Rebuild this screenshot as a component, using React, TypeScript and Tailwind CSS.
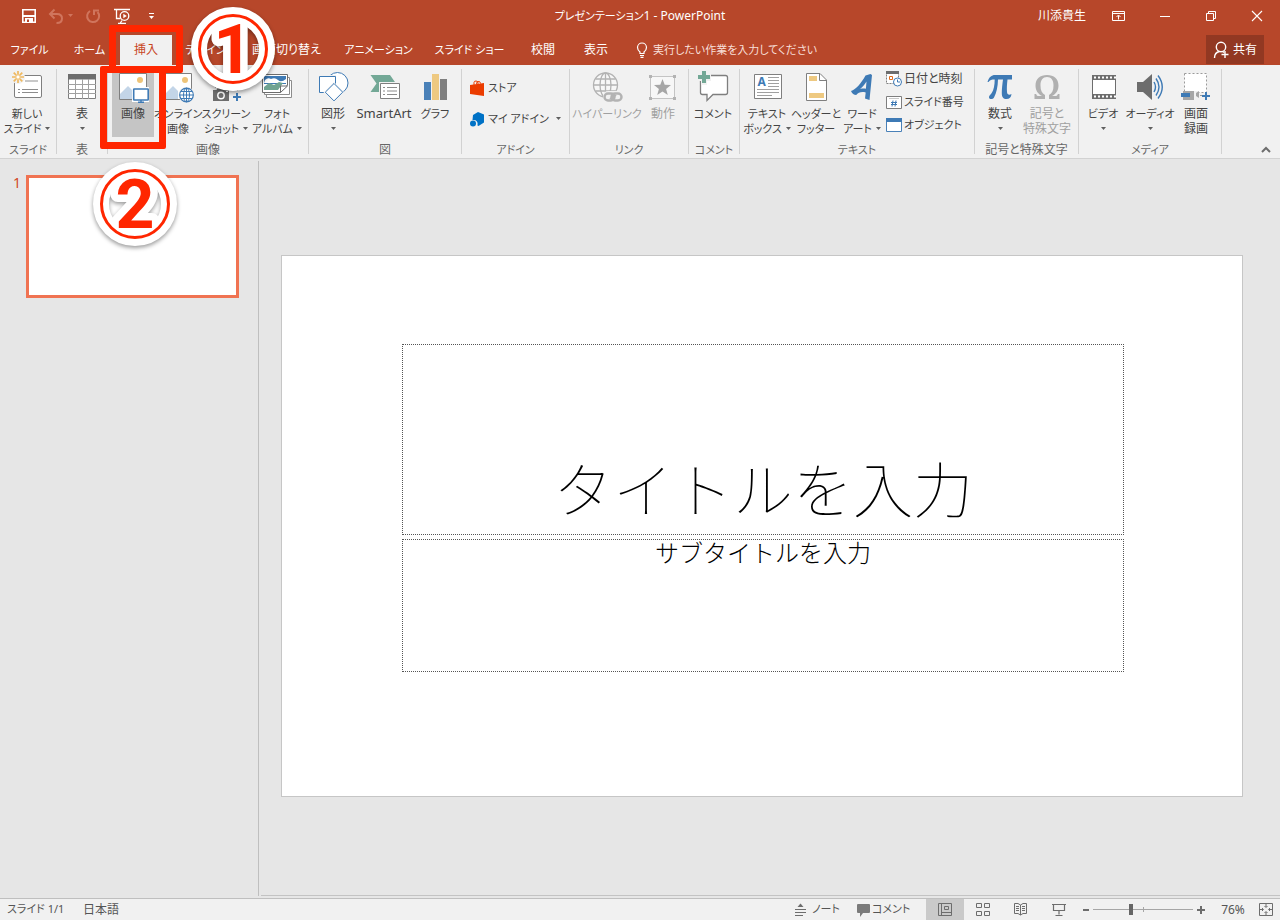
// Presentation editor window: title bar, ribbon (Insert tab), slide list,
// editing surface and status bar, with two numbered callouts on top.
import type { ReactNode } from "react";
import { clsx } from "clsx";

const TABS = [
  { label: "ファイル", className: "w-[59px] text-[11px]" },
  { label: "ホーム", className: "w-[61px] text-[11px]" },
  { label: "挿入", className: "w-[52px]", active: true },
  { label: "デザイン", className: "w-[67px] text-[11px]" },
  { label: "画面切り替え", className: "w-[95px]" },
  { label: "アニメーション", className: "w-[89px] text-[11px]" },
  { label: "スライド ショー", className: "w-[93px] text-[11px]" },
  { label: "校閲", className: "w-[54px]" },
  { label: "表示", className: "w-[52px]" },
];

function Caret({ className }: { className?: string }) {
  return (
    <svg viewBox="0 0 5 3" className={clsx("inline-block h-[3px] w-[5px] shrink-0", className)} aria-hidden="true">
      <path d="M0 0h5L2.5 3z" fill="currentColor" />
    </svg>
  );
}

function Icon({ children }: { children: ReactNode }) {
  return (
    <svg viewBox="0 0 32 32" className="h-8 w-8 shrink-0" fill="none" aria-hidden="true">
      {children}
    </svg>
  );
}

function SmallIcon({ children }: { children: ReactNode }) {
  return (
    <svg viewBox="0 0 16 16" className="h-4 w-4 shrink-0" fill="none" aria-hidden="true">
      {children}
    </svg>
  );
}

interface RibbonButtonProps {
  icon: ReactNode;
  lines: string[];
  className: string;
  menu?: boolean;
  active?: boolean;
  disabled?: boolean;
}

function RibbonButton({ icon, lines, className, menu, active, disabled }: RibbonButtonProps) {
  return (
    <button
      disabled={disabled}
      className={clsx(
        "flex h-[66px] shrink-0 flex-col items-center leading-[15px] whitespace-nowrap",
        className,
        active && "bg-[#c5c5c5]",
        disabled ? "text-[#a0a0a0]" : "text-[#444444]",
      )}
    >
      <Icon>{icon}</Icon>
      <span className="mt-[3px]">{lines[0]}</span>
      {(lines[1] || menu) && (
        <span className="flex h-[15px] items-center gap-1">
          {lines[1]}
          {menu && <Caret className="text-[#5f5f5f]" />}
        </span>
      )}
    </button>
  );
}

interface GroupProps {
  label: string;
  className: string;
  labelClassName?: string;
  children: ReactNode;
}

function Group({ label, className, labelClassName, children }: GroupProps) {
  return (
    <>
      <section className={clsx("flex shrink-0 flex-col", className)} aria-label={label}>
        <div className="flex min-h-[71px] flex-1">{children}</div>
        <div className={clsx("text-center leading-4 whitespace-nowrap text-[#666666]", labelClassName)}>{label}</div>
      </section>
      <div className="-mt-0.5 mb-1 w-px shrink-0 bg-[#d2d2d2]" />
    </>
  );
}

function PictureBase() {
  return (
    <>
      <path d="M2.5 2.5h27v26h-27z" fill="#fff" stroke="#7f7f7f" />
      <circle cx="23" cy="9" r="3" fill="#eec478" />
      <path d="M3 28V23l8-8 5 5v8z" fill="#c3d5e8" />
    </>
  );
}

const icons = {
  newSlide: (
    <>
      <rect x="3.5" y="4.5" width="27" height="22" rx="1.5" fill="#fff" stroke="#7f7f7f" />
      <path d="M14 10h13" stroke="#c8c8c8" strokeWidth="2" />
      <path d="M7 18.5h2M11 18.5h16M7 21.5h2M11 21.5h16" stroke="#8c8c8c" />
      <circle cx="7" cy="6" r="7" fill="#f1f1f1" />
      <path
        d="M7 0v3.5M7 8.5v3.5M1 6h3.5M9.5 6H13M2.7 1.7l2.5 2.5M8.8 7.8l2.5 2.5M2.7 10.3l2.5-2.5M8.8 4.2l2.5-2.5"
        stroke="#efb85e"
        strokeWidth="1.7"
      />
      <circle cx="7" cy="6" r="2.2" fill="#fff" stroke="#efb85e" />
    </>
  ),
  table: (
    <>
      <path d="M2.5 3.5h27v24h-27z" fill="#fff" stroke="#7f7f7f" />
      <path d="M2 3h28v5.5H2z" fill="#6d6d6d" />
      <path d="M2 13.5h28M2 18.5h28M2 22.5h28M9.5 8v20M16.5 8v20M22.5 8v20" stroke="#a0a0a0" />
    </>
  ),
  picture: (
    <>
      <PictureBase />
      <path d="M15 16h17v15H15z" fill="#fff" />
      <rect x="16.7" y="18" width="14.5" height="11" rx=".5" fill="#fff" stroke="#3e7ab5" strokeWidth="1.6" />
      <path d="M24 29v2M21 31.3h6" stroke="#3e7ab5" strokeWidth="1.4" />
    </>
  ),
  online: (
    <>
      <PictureBase />
      <circle cx="24.5" cy="24" r="8" fill="#f1f1f1" />
      <circle cx="24.5" cy="24" r="6.8" fill="#fff" stroke="#3e7ab5" strokeWidth="1.2" />
      <ellipse cx="24.5" cy="24" rx="3" ry="6.8" stroke="#3e7ab5" />
      <path d="M24.5 17v14M17.7 24h13.6M19 20.5h11M19 27.5h11" stroke="#3e7ab5" />
    </>
  ),
  screenshot: (
    <>
      <path d="M5.5 17V2.5h22V21" stroke="#9a9a9a" strokeDasharray="2 2" />
      <path d="M3 19h3.5l1-2h7l1 2H19v11H3z" fill="#6d6d6d" />
      <circle cx="11" cy="24.5" r="3.2" stroke="#fff" strokeWidth="1.4" />
      <path d="M16 20.5h2" stroke="#fff" />
      <path d="M27 22v8M23 26h8" stroke="#3e7ab5" strokeWidth="2" />
    </>
  ),
  album: (
    <>
      <path d="M5.5 9.5h25v17h-25z" fill="#fff" stroke="#8c8c8c" />
      <path d="M3.5 6.5h25v17h-25z" fill="#fff" stroke="#8c8c8c" />
      <path d="M1.5 3.5h25V14l-7 7.5h-18z" fill="#fff" stroke="#6d6d6d" />
      <path d="M3 5h22v8H3z" fill="#3e7ab5" />
      <path d="M4 9q3-3 6-1 4-2 7 1t8-1v4H3z" fill="#fff" />
      <path d="M3 16l5-4 5 2 5-3 4 1-5 7H3z" fill="#6fa391" />
      <path d="M19.5 21.5V15h7z" fill="#fff" stroke="#6d6d6d" />
    </>
  ),
  shapes: (
    <>
      <circle cx="20.5" cy="12" r="10.5" fill="#fff" stroke="#3e7ab5" />
      <path d="M1 4h18v18H1z" fill="#f1f1f1" />
      <path d="M2.5 5.5h16v16h-16z" fill="#fff" stroke="#3e7ab5" />
      <path d="M17 11l10.5 10.5L17 32 6.5 21.5z" fill="#f1f1f1" />
      <path d="M17 12.5l8.7 8.7-8.7 8.7-8.7-8.7z" fill="#fff" stroke="#3e7ab5" />
    </>
  ),
  smartArt: (
    <>
      <path d="M2.5 4H22l6 8.5-6 8.5H2.5l6-8.5z" fill="#73a896" />
      <path d="M11 11h21v18H11z" fill="#f1f1f1" />
      <path d="M12.5 12.5h19v15h-19z" fill="#fff" stroke="#7f7f7f" />
      <path d="M15 16.5h2M19 16.5h10M15 20h2M19 20h10M15 23.5h2M19 23.5h10" stroke="#8c8c8c" />
    </>
  ),
  chart: (
    <>
      <path d="M5 11h7v18H5z" fill="#4a81b8" />
      <path d="M13 3h7v26h-7z" fill="#eec981" />
      <path d="M21 8h7v21h-7z" fill="#7f7f7f" />
    </>
  ),
  hyperlink: (
    <>
      <g stroke="#b3b3b3" strokeWidth="1.3">
        <circle cx="14.5" cy="14" r="12" fill="#f7f7f7" />
        <ellipse cx="14.5" cy="14" rx="5.5" ry="12" />
        <path d="M14.5 2v24M2.5 14h24M4.5 8h20M4.5 20h20" />
      </g>
      <rect x="12" y="20" width="20" height="12" rx="5" fill="#f1f1f1" />
      <rect x="13.5" y="22.5" width="10" height="7" rx="3.5" stroke="#b3b3b3" strokeWidth="2.4" />
      <rect x="20.5" y="22.5" width="10" height="7" rx="3.5" stroke="#b3b3b3" strokeWidth="2.4" />
      <path d="M19 28l6-4" stroke="#b3b3b3" strokeWidth="2" />
    </>
  ),
  action: (
    <>
      <path d="M3.5 5.5h24v22h-24z" fill="#f7f7f7" stroke="#c4c4c4" />
      <path d="M2 4h3v3H2zM26 4h3v3h-3zM2 26h3v3H2zM26 26h3v3h-3z" fill="#b3b3b3" />
      <path d="M15.5 8l2.2 5.8 6.3.3-4.9 3.9 1.7 6-5.3-3.5-5.3 3.5 1.7-6L7 14.1l6.3-.3z" fill="#a6a6a6" />
    </>
  ),
  comment: (
    <>
      <path
        d="M5.5 4.500h23a2 2 0 0 1 2 2v15a2 2 0 0 1-2 2H16l-6 6v-6H5.500a2 2 0 0 1-2-2v-15a2 2 0 0 1 2-2z"
        fill="#fff"
        stroke="#7f7f7f"
        strokeWidth="1.3"
      />
      <path d="M4 -1h6v4h4v7h-4v4H4v-4H0V3h4z" fill="#f1f1f1" />
      <path d="M5 0h4v4h4v4H9v4H5V8H1V4h4z" fill="#73a896" />
    </>
  ),
  textBox: (
    <>
      <path d="M3.5 3.5h27v24h-27z" fill="#fff" stroke="#7f7f7f" />
      <text x="6.5" y="15" fontSize="12" fontWeight="700" fill="#3e7ab5">
        A
      </text>
      <path d="M17 6.500h11M17 9.500h11M17 12.500h11M17 15.500h11M6 18.500h22M6 21.500h22M6 24.500h15" stroke="#a0a0a0" />
    </>
  ),
  headerFooter: (
    <>
      <path d="M6.5 2.5H20l6.5 6.5v20.5h-20z" fill="#fff" stroke="#7f7f7f" />
      <path d="M19.5 2.5v7h7" stroke="#7f7f7f" />
      <path d="M9 5h8v5H9zM9 22h15v5H9z" fill="#eec981" />
    </>
  ),
  wordArt: (
    <path
      d="M5 20c5-1.500 10-7.500 14.500-15.500L24.500 3 26 4l-2.500 25-4.500-1.500.7-6c-4-1-7.500-.2-9.500 2.500C8 24 6 22.500 5 20zM20.500 10.500c-2 3-4 5.500-6.500 7.500 2-.5 4-.6 5.900-.3z"
      fill="#3e7ab5"
      fillRule="evenodd"
    />
  ),
  equation: (
    <path
      d="M3.5 11C5 6 7.500 4 11 4h17v4.500h-4.500c-.6 5-.8 9-.5 12.500.2 2.500 2 3.500 4.500 2-.3 3.500-2 5-5 5-3.200 0-4.700-2-4.700-6 0-4 .5-8.500 1.200-13.500H14c-.2 7-1.500 13.500-4 18-1.200 2-4.600 2-5 0-.2-1.700 1.500-2.700 2.700-4.500 2-3 3-8 3-13.500C7.500 8.500 6 9 4.500 11z"
      fill="#3e7ab5"
    />
  ),
  symbol: (
    <path
      d="M3.500 28v-5h1.700c.3 1.600 1 2 2.500 2H11c-4-2-6.500-5.500-6.500-10.500C4.500 8 9 4 16 4s11.500 4 11.500 10.500c0 5-2.500 8.500-6.500 10.500h3.300c1.500 0 2.200-.4 2.500-2h1.700v5H18v-4c3-1.500 4.500-4.500 4.500-9.500 0-5.500-2.300-8.500-6.500-8.500s-6.500 3-6.500 8.500c0 5 1.500 8 4.500 9.500v4z"
      fill="#b0b0b0"
    />
  ),
  video: (
    <>
      <path d="M5 4h24v24H5z" fill="#6d6d6d" />
      <path d="M6 9h22v14H6z" fill="#fff" />
      <path d="M7 6.5h22M7 25.5h22" stroke="#fff" strokeWidth="2" strokeDasharray="2 2" />
    </>
  ),
  audio: (
    <>
      <path d="M3 11h6L18 3v26l-9-8H3z" fill="#6d6d6d" />
      <path d="M20 11q3 5 0 10M22 7.5q6 8.500 0 17M24 4.500q8.500 11.500 0 23" stroke="#3e7ab5" strokeWidth="1.4" />
    </>
  ),
  record: (
    <>
      <path d="M4.5 2.5h22v19h-22z" fill="#fff" stroke="#9a9a9a" strokeDasharray="2 2" />
      <path d="M1 20h18v11H1z" fill="#f1f1f1" />
      <path d="M3 20h11v9H3zM16 22l3-2v7l-3-2z" fill="#a6a6a6" />
      <path d="M1 22h9v4H1z" fill="#3e7ab5" />
      <path d="M20 24.5h3" stroke="#9a9a9a" />
      <path d="M26 21v8M22 25h8" stroke="#3e7ab5" strokeWidth="2" />
    </>
  ),
};

function TitleBar() {
  return (
    <div className="grid h-[31px] grid-cols-[1fr_auto_1fr] items-center">
      <div className="flex items-center gap-[9px] pl-[19px]">
        <button aria-label="上書き保存" className="flex w-5 justify-center">
          <SmallIcon>
            <path d="M1.8 1.8h12.400v12.400H1.800z" stroke="#fff" strokeWidth="1.6" />
            <path d="M2 8h12" stroke="#fff" strokeWidth="2" />
            <path d="M4 10h8v5H4z" fill="#fff" />
            <path d="M6 11.5h2V14H6z" fill="#b7472a" />
          </SmallIcon>
        </button>
        <button disabled aria-label="元に戻す" className="flex w-[29px] items-center gap-1 text-[#d0755d]">
          <SmallIcon>
            <path d="M6.500 1.500L2 6l4.500 4.500M2 6h7q5 0 5 4.500T8.500 15" stroke="currentColor" strokeWidth="2" />
          </SmallIcon>
          <Caret />
        </button>
        <button disabled aria-label="繰り返し" className="flex w-3.5 justify-center text-[#d0755d]">
          <SmallIcon>
            <path d="M5 3A6 6 0 1 0 12.500 4" stroke="currentColor" strokeWidth="2" />
            <path d="M9 7V2.500h5" stroke="currentColor" strokeWidth="2" />
          </SmallIcon>
        </button>
        <button aria-label="先頭から開始" className="flex w-[26px] justify-center">
          <SmallIcon>
            <path d="M0 1.500h16M2.500 2v8.500h4M6 15.500l2-3M4 15.300h8" stroke="#fff" strokeWidth="1.300" />
            <circle cx="10.5" cy="8" r="4.3" fill="#b7472a" stroke="#fff" strokeWidth="1.3" />
            <path d="M9.300 5.800v4.400L12.800 8z" fill="#fff" />
          </SmallIcon>
        </button>
        <button aria-label="クイック アクセス ツール バーのユーザー設定" className="flex w-3.5 flex-col items-center gap-0.5 text-white">
          <span className="h-px w-[5px] bg-white" />
          <Caret />
        </button>
      </div>
      <div className="whitespace-nowrap text-white">
        <span className="text-[11px]">プレゼンテーション</span>1 - PowerPoint
      </div>
      <div className="flex items-center justify-end text-white">
        <span className="mr-2.5">川添貴生</span>
        <button aria-label="リボンの表示オプション" className="flex w-[46px] justify-center">
          <SmallIcon>
            <path d="M1.500 3.500h12v9h-12zM1.500 5.500h12M7.500 11.500V7.500M5.500 9l2-2 2 2" stroke="#fff" />
          </SmallIcon>
        </button>
        <button aria-label="最小化" className="flex w-[46px] justify-center">
          <SmallIcon>
            <path d="M3 8.500h10" stroke="#fff" />
          </SmallIcon>
        </button>
        <button aria-label="元に戻す (縮小)" className="flex w-[46px] justify-center">
          <SmallIcon>
            <path d="M3.500 5.500h7v7h-7zM5.500 5.500v-2h7v7h-2" stroke="#fff" />
          </SmallIcon>
        </button>
        <button aria-label="閉じる" className="flex w-[46px] justify-center">
          <SmallIcon>
            <path d="M3 3l10 10M13 3L3 13" stroke="#fff" strokeWidth="1.100" />
          </SmallIcon>
        </button>
      </div>
    </div>
  );
}

function TabRow() {
  return (
    <div className="flex h-[34px] items-end">
      <nav className="flex">
        {TABS.map((tab) => (
          <button
            key={tab.label}
            className={clsx(
              "h-[30px] shrink-0 whitespace-nowrap",
              tab.className,
              tab.active ? "bg-[#f1f1f1] text-[#c8451f]" : "text-white",
            )}
          >
            {tab.label}
          </button>
        ))}
      </nav>
      <label className="ml-3 flex h-[30px] items-center gap-[3px] text-[11px] text-[#f8dfd8]">
        <SmallIcon>
          <path
            d="M6 11.500V10Q3.500 8 3.500 5.500a4.500 4.500 0 0 1 9 0Q12.500 8 10 10v1.500zM6 13.500h4M6.500 15.300h3"
            stroke="#fff"
            strokeWidth="1.2"
          />
        </SmallIcon>
        <input
          type="text"
          aria-label="操作アシスト"
          placeholder="実行したい作業を入力してください"
          className="w-[200px] bg-transparent outline-none placeholder:text-[#f8dfd8]"
        />
      </label>
      <button className="mr-4 mb-px ml-auto flex h-[29px] w-[58px] items-center justify-center gap-1 bg-[#923822] text-white">
        <svg viewBox="0 0 16 18" className="h-[18px] w-4" fill="none" aria-hidden="true">
          <circle cx="8" cy="6" r="4.7" stroke="#fff" strokeWidth="1.4" />
          <path d="M1.500 17q0-5.500 5-6.500M9.500 10.500l1.500 1M12 10v7M8.500 13.500h7" stroke="#fff" strokeWidth="1.4" />
        </svg>
        共有
      </button>
    </div>
  );
}

function Ribbon() {
  return (
    <div className="flex border-b border-[#d2d2d2] bg-[#f1f1f1] pt-1.5">
      <Group label="スライド" className="w-14" labelClassName="text-[11px]">
        <RibbonButton icon={icons.newSlide} lines={["新しい", "スライド"]} menu className="w-[54px] text-[11px]" />
      </Group>
      <Group label="表" className="w-[50px]">
        <RibbonButton icon={icons.table} lines={["表"]} menu className="w-[50px]" />
      </Group>
      <Group label="画像" className="w-[200px]">
        <div className="flex gap-px pl-1">
          <RibbonButton icon={icons.picture} lines={["画像"]} active className="w-[42px]" />
          <RibbonButton icon={icons.online} lines={["オンライン", "画像"]} className="w-[46px] text-[11px]" />
          <RibbonButton icon={icons.screenshot} lines={["スクリーン", "ショット"]} menu className="w-12 text-[11px]" />
          <RibbonButton icon={icons.album} lines={["フォト", "アルバム"]} menu className="w-[52px] text-[11px]" />
        </div>
      </Group>
      <Group label="図" className="w-[152px]">
        <div className="flex pl-0.5">
          <RibbonButton icon={icons.shapes} lines={["図形"]} menu className="w-11" />
          <RibbonButton icon={icons.smartArt} lines={["SmartArt"]} className="w-[58px] text-[13px]" />
          <RibbonButton icon={icons.chart} lines={["グラフ"]} className="w-11 text-[11px]" />
        </div>
      </Group>
      <Group label="アドイン" className="w-[107px]" labelClassName="text-[11px]">
        <div className="flex flex-1 flex-col gap-3.5 px-2 pt-2 text-[11px] whitespace-nowrap text-[#444444]">
          <button className="flex items-center gap-0.5 leading-[17px]">
            <SmallIcon>
              <path d="M0 5l14-2v13L0 14z" fill="#eb3c00" />
              <path d="M4 6V2.500Q4 1 6 1t2 2v2M6.500 4q0-3 2.500-2.500 1.500.3 1.500 2" stroke="#eb3c00" />
            </SmallIcon>
            ストア
          </button>
          <button className="flex items-center gap-0.5 leading-[17px]">
            <SmallIcon>
              <path d="M8 1l6 2.500v8L8.500 15l-1-.5q1-6-5-5.500L3 4z" fill="#0072c6" />
              <circle cx="3" cy="12.5" r="3" fill="#0072c6" />
            </SmallIcon>
            マイ アドイン
            <Caret className="ml-auto text-[#5f5f5f]" />
          </button>
        </div>
      </Group>
      <Group label="リンク" className="w-[118px]" labelClassName="text-[11px]">
        <div className="flex pl-px">
          <RibbonButton icon={icons.hyperlink} lines={["ハイパーリンク"]} disabled className="w-[72px] text-[11px]" />
          <RibbonButton icon={icons.action} lines={["動作"]} disabled className="w-10" />
        </div>
      </Group>
      <Group label="コメント" className="w-[50px]" labelClassName="text-[11px]">
        <RibbonButton icon={icons.comment} lines={["コメント"]} className="w-12 text-[11px]" />
      </Group>
      <Group label="テキスト" className="w-[234px]" labelClassName="text-[11px]">
        <div className="flex pl-0.5">
          <RibbonButton icon={icons.textBox} lines={["テキスト", "ボックス"]} menu className="w-[50px] text-[11px]" />
          <RibbonButton icon={icons.headerFooter} lines={["ヘッダーと", "フッター"]} className="w-12 text-[11px]" />
          <RibbonButton icon={icons.wordArt} lines={["ワード", "アート"]} menu className="w-11 text-[11px]" />
        </div>
        <div className="flex flex-col gap-[7px] pl-0.5 whitespace-nowrap text-[#444444]">
          <button className="flex h-4 items-center gap-0.5">
            <SmallIcon>
              <path d="M.5 1.500h12v11H.5z" fill="#fff" stroke="#7f7f7f" strokeDasharray="2 1" />
              <path d="M0 0h13v3H0z" fill="#6d6d6d" />
              <path d="M3.500 5.500h3v3h-3z" stroke="#e06c1f" />
              <circle cx="11.5" cy="11" r="4" fill="#fff" stroke="#3e7ab5" />
              <path d="M11.500 8.500V11h2.500" stroke="#3e7ab5" />
            </SmallIcon>
            日付と時刻
          </button>
          <button className="flex h-4 items-center gap-0.5 text-[11px]">
            <SmallIcon>
              <path d="M.5 2.500h15v12H.5z" fill="#fff" stroke="#7f7f7f" />
              <path d="M3 4.500h10" stroke="#c8c8c8" />
              <path d="M7 6.500L6 12.500M10 6.500L9 12.500M5 8.500h6M5 10.500h6" stroke="#3e7ab5" />
            </SmallIcon>
            スライド番号
          </button>
          <button className="flex h-4 items-center gap-0.5 text-[11px]">
            <SmallIcon>
              <path d="M.5 1.500h15v13H.5z" fill="#fff" stroke="#4a81b8" />
              <path d="M0 1h16v4H0z" fill="#3e7ab5" />
            </SmallIcon>
            オブジェクト
          </button>
        </div>
      </Group>
      <Group label="記号と特殊文字" className="w-[103px]">
        <div className="flex pl-[3px]">
          <RibbonButton icon={icons.equation} lines={["数式"]} menu className="w-11" />
          <RibbonButton icon={icons.symbol} lines={["記号と", "特殊文字"]} disabled className="w-[50px]" />
        </div>
      </Group>
      <Group label="メディア" className="w-[142px]" labelClassName="text-[11px]">
        <div className="flex pl-px">
          <RibbonButton icon={icons.video} lines={["ビデオ"]} menu className="w-[46px] text-[11px]" />
          <RibbonButton icon={icons.audio} lines={["オーディオ"]} menu className="w-12 text-[11px]" />
          <RibbonButton icon={icons.record} lines={["画面", "録画"]} className="w-11" />
        </div>
      </Group>
      <button aria-label="リボンを折りたたむ" className="mr-1.5 ml-auto self-end">
        <SmallIcon>
          <path d="M4 10l4-4 4 4" stroke="#6d6d6d" strokeWidth="2" />
        </SmallIcon>
      </button>
    </div>
  );
}

function Workspace() {
  return (
    <main className="flex flex-1 bg-[#e6e6e6] pt-0.5 pb-0.5">
      <aside className="flex w-[259px] shrink-0 items-start border-r border-[#bfbfbf] pt-3.5 pl-[13px]">
        <span className="w-[13px] text-sm leading-4 text-[#d24726]">1</span>
        <button aria-label="スライド 1" className="h-[123px] w-[213px] border-3 border-[#f07352] bg-white" />
      </aside>
      <div className="ml-0.5 flex flex-1 items-center border-b border-[#c3c3c3] pr-[37px] pb-1 pl-5">
        <article className="flex aspect-[962/542] w-full flex-col border border-[#c6c6c6] bg-white pt-[88px] pr-[118px] pl-[120px]">
          <div className="flex h-[191px] items-end justify-center border border-dotted border-[#555555] pb-[11px]">
            <h1 className="font-['Noto_Sans_CJK_JP',sans-serif] text-[60px] leading-[72px] font-thin whitespace-nowrap text-black [font-feature-settings:normal]">
              タイトルを入力
            </h1>
          </div>
          <div className="mt-1 h-[133px] border border-dotted border-[#555555] text-center">
            <p className="font-['Noto_Sans_CJK_JP',sans-serif] text-2xl leading-[24px] font-light text-black [font-feature-settings:normal]">
              サブタイトルを入力
            </p>
          </div>
        </article>
      </div>
    </main>
  );
}

function StatusBar() {
  return (
    <footer className="flex h-[22px] items-center border-t border-[#bfbfbf] bg-[#f1f1f1] pl-[7px] text-[#555555]">
      <span className="w-[76px] text-[11px]">スライド 1/1</span>
      <span>日本語</span>
      <div className="ml-auto flex h-full items-center">
        <button className="flex w-[62px] items-center gap-0.5 text-[11px]">
          <SmallIcon>
            <path d="M6.500 1.500l3 3.500h-6z" fill="#6d6d6d" />
            <path d="M1 7.500h11M1 10.500h11M1 13.500h8" stroke="#6d6d6d" />
          </SmallIcon>
          ノート
        </button>
        <button className="flex w-[70px] items-center text-[11px]">
          <SmallIcon>
            <path d="M2 2h11q1 0 1 1v7q0 1-1 1H7l-3 4v-4H2q-1 0-1-1V3q0-1 1-1z" fill="#7a7a7a" />
          </SmallIcon>
          コメント
        </button>
        <button aria-label="標準" className="flex h-full w-[38px] items-center justify-center bg-[#cacaca]">
          <SmallIcon>
            <path d="M1.500 1.500h13v12h-13zM4.500 2v11.500M4.500 10.500h10M7.500 4.500h4v3h-4z" stroke="#6d6d6d" />
          </SmallIcon>
        </button>
        <button aria-label="スライド一覧" className="flex h-full w-[38px] items-center justify-center">
          <SmallIcon>
            <path d="M1.500 1.500h5v4h-5zM9.500 1.500h5v4h-5zM1.500 9.500h5v4h-5zM9.500 9.500h5v4h-5z" stroke="#6d6d6d" />
          </SmallIcon>
        </button>
        <button aria-label="閲覧表示" className="flex h-full w-[38px] items-center justify-center">
          <SmallIcon>
            <path
              d="M7.500 3L5 1.500H1.500v10H5L7.500 13 10 11.500h3.500v-10H10zM7.500 3v10M3 4.500h3M3 6.500h3M3 8.500h3M9 4.500h3M9 6.500h3M9 8.500h3"
              stroke="#6d6d6d"
            />
          </SmallIcon>
        </button>
        <button aria-label="スライド ショー" className="flex h-full w-[38px] items-center justify-center">
          <SmallIcon>
            <path d="M1 2.500h14M2.500 3v5.500h11V3M8 8.500v4M4.500 13.500h7" stroke="#6d6d6d" strokeWidth="1.2" />
          </SmallIcon>
        </button>
        <button aria-label="縮小" className="flex w-[15px] justify-center">
          <span className="h-0.5 w-1.5 bg-[#6d6d6d]" />
        </button>
        <div className="relative flex h-full items-center">
          <span className="absolute left-[50px] h-[5px] w-px bg-[#a6a6a6]" />
          <input
            type="range"
            aria-label="ズーム"
            min={0}
            max={100}
            defaultValue={38}
            className="relative h-px w-[100px] appearance-none bg-[#a6a6a6] [&::-webkit-slider-thumb]:h-[11px] [&::-webkit-slider-thumb]:w-1 [&::-webkit-slider-thumb]:appearance-none [&::-webkit-slider-thumb]:bg-[#666666]"
          />
        </div>
        <button aria-label="拡大" className="flex w-4 justify-center">
          <svg viewBox="0 0 8 8" className="h-2 w-2" aria-hidden="true">
            <path d="M3 0h2v3h3v2H5v3H3V5H0V3h3z" fill="#6d6d6d" />
          </svg>
        </button>
        <span className="w-12 text-center">76%</span>
        <button aria-label="ウィンドウの大きさに合わせる" className="mr-[5px] flex w-[18px] justify-center">
          <SmallIcon>
            <path d="M1.500 1.500h13v12h-13z" stroke="#6d6d6d" />
            <path
              d="M8 2v3M6.500 4L8 5.500 9.500 4M8 13v-3M6.500 11L8 9.500 9.500 11M2 7.500h3M4 6l1.500 1.500L4 9M14 7.500h-3M12 6l-1.500 1.500L12 9"
              stroke="#6d6d6d"
            />
          </SmallIcon>
        </button>
      </div>
    </footer>
  );
}

// Numbered marker: white ring with a red line in it, and an outlined digit.
function StepBadge({ step, className }: { step: number; className: string }) {
  return (
    <svg viewBox="0 0 90 90" className={clsx("absolute h-[90px] w-[90px] drop-shadow-[0_2px_2px_rgba(0,0,0,0.4)]", className)}>
      <circle cx="45" cy="45" r="34" fill="none" stroke="#fff" strokeWidth="16" />
      <text
        x="45"
        y="69"
        textAnchor="middle"
        fontSize="68"
        fontWeight="700"
        fill="#ff2600"
        stroke="#fff"
        strokeWidth="15"
        strokeLinejoin="round"
        paintOrder="stroke"
        className="font-[Roboto,sans-serif]"
      >
        {step}
      </text>
      <circle cx="45" cy="45" r="33.5" fill="none" stroke="#ff2600" strokeWidth="3" />
    </svg>
  );
}

export default function App() {
  return (
    <div className="relative flex min-h-screen flex-col overflow-hidden font-['Noto_Sans','Noto_Sans_CJK_JP',sans-serif] text-xs [font-feature-settings:'palt']">
      <header className="bg-[#b7472a]">
        <TitleBar />
        <TabRow />
      </header>
      <Ribbon />
      <Workspace />
      <StatusBar />
      <div className="pointer-events-none absolute top-[25px] left-[109px] h-12 w-[74px] rounded-xs border-7 border-[#ff2600]" />
      <div className="pointer-events-none absolute top-[66px] left-[100px] h-[83px] w-[66px] rounded-xs border-7 border-[#ff2600]" />
      <StepBadge step={1} className="pointer-events-none top-1 left-[188px]" />
      <StepBadge step={2} className="pointer-events-none top-[159px] left-[90px]" />
    </div>
  );
}
